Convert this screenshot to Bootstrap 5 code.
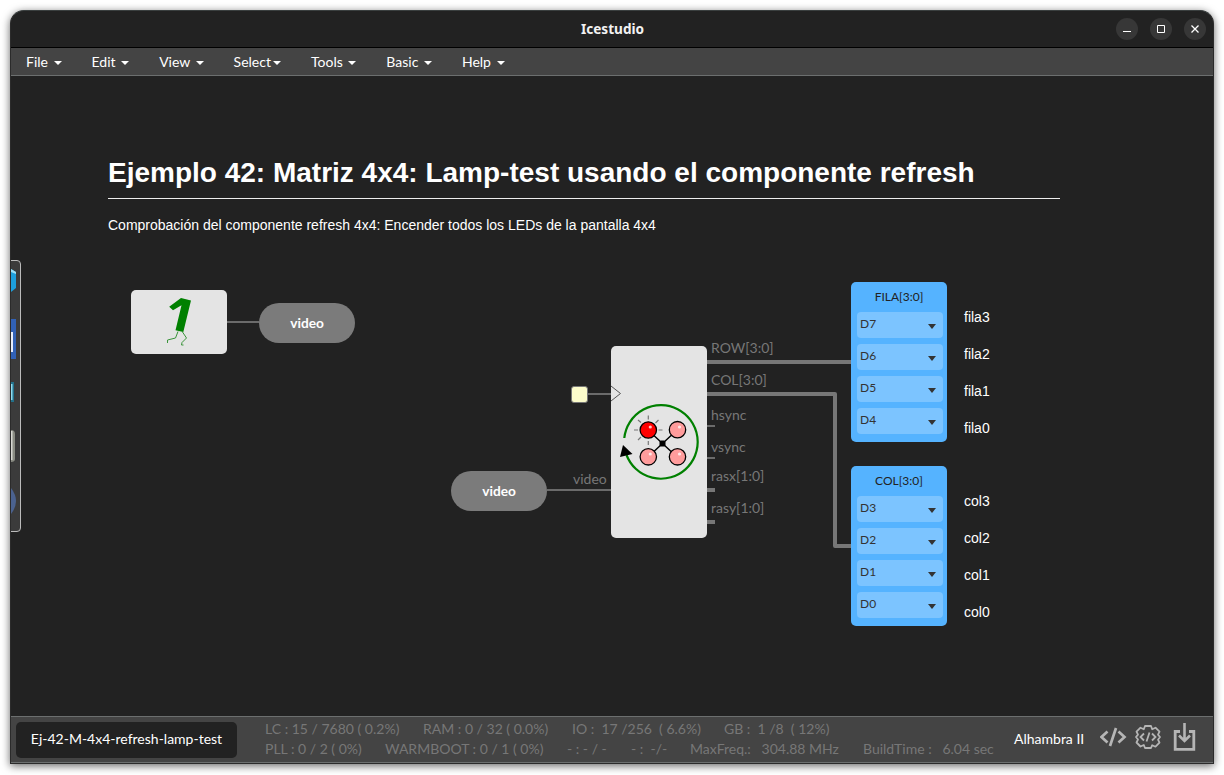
<!DOCTYPE html>
<html lang="es">
<head>
<meta charset="utf-8">
<title>Icestudio</title>
<link href="https://cdn.jsdelivr.net/npm/bootstrap@5.3.0/dist/css/bootstrap.min.css" rel="stylesheet">
<style>
body{background:#fff;font-family:Lato,sans-serif;font-size:14px;line-height:20px;height:775px;overflow:hidden;padding:10px}
.win{width:1204px;height:754px;background:#222;border:1px solid #2b2b2b;border-top-color:#3a3f3f;border-radius:14px 14px 0 0;box-shadow:0 2px 8px rgba(0,0,0,.6);overflow:hidden}
.titlebar{height:37px;border-bottom:1px solid #000;font:700 13.6px/36px "Noto Sans",sans-serif;color:#f2f2f2;padding-left:1px}
.winbtns{right:7px;top:7px;gap:12px}
.winbtns svg{display:block}
.menubar{height:28px;background:#444;border-bottom:1px solid #6c6f6f;color:#fff}
.menubar a{color:#fff;text-decoration:none;padding:0 15px;line-height:27px;font-size:14px;white-space:pre}
.menubar i{display:inline-block;border:4px solid transparent;border-top-color:#fff;border-bottom:0;margin-left:2px;vertical-align:middle}
.board{overflow:hidden}
.plane{left:-11px;top:-76px;width:1224px;height:775px}
.plane>*{position:absolute}
.info{font-family:"Liberation Sans",Arial,sans-serif;color:#fff;left:108px;top:156px;width:952px}
.info h1{font-size:28px;font-weight:700;line-height:33px;margin:0;padding-bottom:9px;border-bottom:1px solid #eee;white-space:nowrap}
.info p{margin:16px 0 0;font-size:14px;line-height:20px}
.block{background:#e4e4e4;border-radius:5px}
.tag{width:96px;height:40px;border-radius:20px;background:#7b7b7b;color:#fff;font-weight:700;line-height:40px;text-align:center;font-size:13.7px}
.port{color:#777;font-size:14px;line-height:20px;white-space:nowrap}
.pins{width:96px;height:160px;border-radius:5px;background:#55b3ff;padding:0 4px 0 6px;color:#333;font-size:12px}
.pins header{height:30px;line-height:30px;text-align:center;color:#222;padding-right:2px}
.pins .pin{height:26px;border-radius:4px;background:#7cc4ff;margin-bottom:6px;padding:0 7px 0 3px;line-height:23px}
.pins .pin i{border:4px solid transparent;border-top:5px solid #333;border-bottom:0;margin-top:12px;height:0}
.names{font:14px/20px "Liberation Sans",Arial,sans-serif;color:#fff}
.names div{height:37px}
.clk{width:17px;height:17px;background:#fcfccb;border:1px solid #777;border-radius:3px}
.drawer{left:0;top:260px;width:21px;height:272px;background:#3b3b3b;border:1px solid #bbb;border-radius:4px}
.statusbar{height:47px;background:#444;border-top:1px solid #6c6f6f;border-bottom:1px solid #6c6f6f}
.proj{background:#222;color:#fff;border-radius:5px;height:36px;width:221px;margin:5px 0 0 5px;line-height:33px;text-align:center}
.stats{color:#777;margin:2px 0 0 28px;width:748px;font-size:14px;line-height:20px}
.stats div{height:20px}
.stats span{white-space:pre;flex:none}
.boardname{color:#fff;line-height:43px;white-space:nowrap;width:87px;padding-left:1px}
</style>
</head>
<body>
<div class="win d-flex flex-column">
  <div class="titlebar position-relative text-center">Icestudio
    <div class="winbtns position-absolute d-flex">
      <svg width="22" height="22"><circle cx="11" cy="11" r="11" fill="#373737"/><path d="M7 13.5h8" stroke="#fff"/></svg>
      <svg width="22" height="22"><circle cx="11" cy="11" r="11" fill="#373737"/><path d="M7.5 7.5h7v7h-7z" fill="none" stroke="#fff"/></svg>
      <svg width="22" height="22"><circle cx="11" cy="11" r="11" fill="#373737"/><path d="M7.500 7.500l7 7m0-7l-7 7" stroke="#fff" stroke-width="1.300"/></svg>
    </div>
  </div>
  <nav class="menubar d-flex">
    <a href="#">File <i></i></a><a href="#">Edit <i></i></a><a href="#">View <i></i></a><a href="#">Select<i></i></a><a href="#">Tools <i></i></a><a href="#">Basic <i></i></a><a href="#">Help <i></i></a>
  </nav>
  <main class="board flex-grow-1 position-relative">
    <div class="plane position-absolute">
      <div class="info"><h1>Ejemplo 42: Matriz 4x4: Lamp-test usando el componente refresh</h1><p>Comprobación del componente refresh 4x4: Encender todos los LEDs de la pantalla 4x4</p></div>

      <svg style="left:0;top:0" width="1224" height="775" fill="none" stroke="#777">
        <path d="M227 322h32M586 394h25M547 490h64M707 426h8M707 458h8" stroke="#6b6b6b" stroke-width="2"/>
        <path d="M707 362h144M707 394h128v152h16M707 490h8M707 522h8" stroke-width="4" stroke-linejoin="round"/>
      </svg>

      <div class="block" style="left:131px;top:290px;width:96px;height:64px"></div>
      <div class="block" style="left:611px;top:346px;width:96px;height:192px"></div>
      <div class="tag" style="left:259px;top:303px">video</div>
      <div class="tag" style="left:451px;top:471px">video</div>
      <div class="clk" style="left:570.5px;top:385.5px"></div>

      <svg style="left:0;top:0" width="1224" height="775" fill="none">
        <path d="M181 298l10 2.500-7.700 31.500-7.800-1.800 6-25-8.500 5-3.800-3.500z" fill="green"/>
        <path d="M178 331.500l-2.500 6.500-8 2v3M182.500 332l4 6-4.500 4.500-.5 2.500h2" stroke="#3b943b"/>
        <path d="M611 386l9.500 7.500-9.500 7.500" stroke="#555"/>
        <path d="M624.300 438A36.800 36.800 0 1 1 626.500 455" stroke="green" stroke-width="2.200"/>
        <path d="M623 445l9.500 9-12.500 3z" fill="#000"/>
        <path d="M648 430l29 27m0-27l-29 27" stroke="#000" stroke-width="1.400"/>
        <rect x="659.500" y="440.500" width="6" height="6" rx="1.500" fill="#000"/>
        <path d="M648.300 415.500v4M648.300 441v4M634 430h4M658.500 430h4M638 420l3 2.500M658.500 420l-3 3M638 440l3-3" stroke="#777" stroke-width="1.200"/>
        <g stroke="#000" stroke-width="1.300"><circle cx="648.300" cy="430" r="8.200" fill="red"/><circle cx="677.500" cy="429.700" r="8.200" fill="#ff9c9c"/><circle cx="648.300" cy="456.800" r="8.200" fill="#ff9c9c"/><circle cx="677.500" cy="456.800" r="8.200" fill="#ff9c9c"/></g>
        <g fill="#fff" opacity=".75"><circle cx="650.300" cy="427" r="1.600"/><circle cx="679.500" cy="427" r="1.600"/><circle cx="650.300" cy="454" r="1.600"/><circle cx="679.500" cy="454" r="1.600"/></g>
      </svg>

      <div class="port" style="left:711px;top:338px">ROW[3:0]</div>
      <div class="port" style="left:711px;top:370px">COL[3:0]</div>
      <div class="port" style="left:711px;top:405px">hsync</div>
      <div class="port" style="left:711px;top:437px">vsync</div>
      <div class="port" style="left:711px;top:466px">rasx[1:0]</div>
      <div class="port" style="left:711px;top:498px">rasy[1:0]</div>
      <div class="port" style="left:573px;top:469px">video</div>

      <div class="pins" style="left:851px;top:282px"><header>FILA[3:0]</header>
        <div class="pin d-flex justify-content-between">D7<i></i></div><div class="pin d-flex justify-content-between">D6<i></i></div><div class="pin d-flex justify-content-between">D5<i></i></div><div class="pin d-flex justify-content-between">D4<i></i></div></div>
      <div class="pins" style="left:851px;top:466px"><header>COL[3:0]</header>
        <div class="pin d-flex justify-content-between">D3<i></i></div><div class="pin d-flex justify-content-between">D2<i></i></div><div class="pin d-flex justify-content-between">D1<i></i></div><div class="pin d-flex justify-content-between">D0<i></i></div></div>
      <div class="names" style="left:964px;top:307px"><div>fila3</div><div>fila2</div><div>fila1</div><div>fila0</div></div>
      <div class="names" style="left:964px;top:491px"><div>col3</div><div>col2</div><div>col1</div><div>col0</div></div>

      <div class="drawer"></div>
      <svg style="left:11px;top:260px" width="8" height="272">
        <path d="M0 9l5 3v16l-5 4z" fill="#1d9fdc"/><path d="M0 9l5 3v2l-5-2z" fill="#9fe0f5"/>
        <path d="M0 59h5v40H0z" fill="#3161b5"/><path d="M0 72h2v20H0z" fill="#e8eefa"/>
        <path d="M0 122h3v20H0z" fill="#23718a"/><path d="M0 124h1.500v16H0z" fill="#8fdcf0"/>
        <path d="M0 170q4 0 4 4v25q0 3-4 3z" fill="#898b82"/><path d="M0 171h1.500v29H0z" fill="#d8d8d2"/>
        <path d="M0 228q10 13 0 26z" fill="#4b628f"/>
      </svg>
    </div>
  </main>
  <footer class="statusbar d-flex">
    <div class="proj">Ej-42-M-4x4-refresh-lamp-test</div>
    <div class="stats">
      <div class="d-flex"><span style="width:158px">LC : 15 / 7680 ( 0.2%)</span><span style="width:149px">RAM : 0 / 32 ( 0.0%)</span><span style="width:152px">IO :  17 /256  ( 6.6%)</span><span>GB :  1 /8  ( 12%)</span></div>
      <div class="d-flex"><span style="width:120px">PLL : 0 / 2 ( 0%)</span><span style="width:182px">WARMBOOT : 0 / 1 ( 0%)</span><span style="width:64px">- : - / -</span><span style="width:59px">- :  -/-</span><span style="width:173px">MaxFreq.:   304.88 MHz</span><span>BuildTime :   6.04 sec</span></div>
    </div>
    <div class="boardname">Alhambra II</div>
    <svg width="100" height="45" fill="none" stroke="#b5b5b5" stroke-width="2">
      <path d="M7.500 14.500l-6 5.500 6 5.500M18.500 14.500l6 5.500-6 5.500M16 11l-6 18" stroke-width="2.700"/>
      <path d="M45 9h6l1.200 3.200 3.300-1.500 4 4-1.500 3 2 2.300-2 2.700 1.500 3-4 4-3.300-1.500L51 31h-6l-1.200-3-3.300 1.500-4-4 1.500-3-2-2.500 2-2.300-1.500-3 4-4 3.300 1.500z" stroke-width="1.800" stroke-linejoin="round"/>
      <path d="M44 16.500l-3.500 3.500 3.500 3.500M52 16.500l3.500 3.500-3.500 3.500M49.500 15.500l-3 9" stroke-width="1.800"/>
      <path d="M80 14.500h-4.800v17.800h18.600V14.500H89" stroke-width="2.800"/><path d="M84.500 6v17M79 18.500l5.500 5.500 5.500-5.500" stroke-width="2.600"/>
    </svg>
  </footer>
</div>
<script src="https://cdn.jsdelivr.net/npm/bootstrap@5.3.0/dist/js/bootstrap.bundle.min.js"></script>
</body>
</html>
